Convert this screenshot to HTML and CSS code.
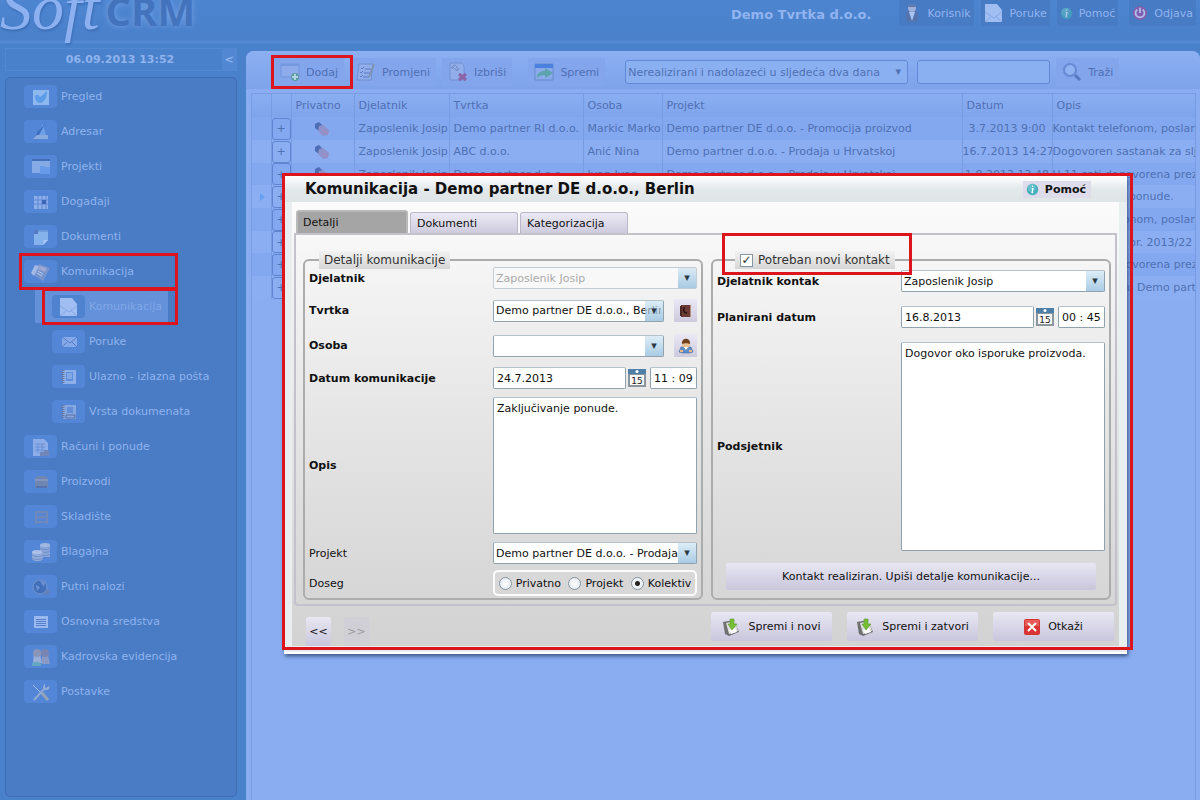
FILE: index.html
```
<!DOCTYPE html>
<html lang="hr">
<head>
<meta charset="utf-8">
<title>Soft CRM - Komunikacija</title>
<link rel="stylesheet" href="styles.css">
</head>
<body>

<!-- icon shapes -->
<svg class="defs" width="0" height="0">
  <symbol id="envelope" viewBox="0 0 20 20"><path d="M1 1h12l5 6v12H1z" fill="#a0bef2"/><path d="M1 9l9 6 8-6M1 19l7-6M18 19l-7-6" stroke="#86a8e6" fill="none"/></symbol>
  <symbol id="info" viewBox="0 0 16 16"><circle cx="8" cy="8" r="7" fill="#45aebd"/><circle cx="7" cy="6" r="5" fill="#7bd0d6" opacity=".5"/><path d="M8 3v2M7 7h1.500l-1 5h1.500" stroke="#fff" stroke-width="1.500" fill="none"/></symbol>
  <symbol id="hand" viewBox="0 0 18 16"><path d="M1 3l4-2 4 4-4 5-4-3z" fill="#4d6db4"/><path d="M5 5l4-1 6 5-1 5-5 1-5-5z" fill="#8f91ca"/><path d="M9 9l5 4" stroke="#b58bb5"/></symbol>
  <symbol id="disk" viewBox="0 0 18 18"><path d="M1 4l11-2 5 12-10 4-4-2z" fill="#707070"/><path d="M4 5l9-2 3 10-9 3z" fill="#dedede"/><path d="M7 12l6-2 2 4-6 2z" fill="#fafafa"/><path d="M8 1h4v5h3l-5 6-4-6h2z" fill="#77bd35" stroke="#4f9520" stroke-width=".5"/></symbol>
  <symbol id="calendar" viewBox="0 0 18 18"><path d="M0 0h18v18H0z" fill="#8b959e"/><path d="M2 6h14v10H2z" fill="#f8f8f8"/><path d="M0 0h18v5H0z" fill="#4e7fa9"/><circle cx="9" cy="2.500" r="1.500" fill="#fff"/><text x="9" y="15" text-anchor="middle" font-family="DejaVu Sans" font-size="9" fill="#222">15</text></symbol>
</svg>

<header class="top">
  <div class="logo"><span class="logo-soft">Soft</span><span class="logo-crm">CRM</span></div>
  <strong class="company">Demo Tvrtka d.o.o.</strong>
  <nav class="top-nav">
    <a href="#"><svg width="20" height="20" viewBox="0 0 20 20"><path d="M4 10c0-3 12-3 12 0l-1 9H5z" fill="#5573ac"/><circle cx="10" cy="5" r="4" fill="#9fb0dc"/><path d="M6 4c0-4 8-4 8 0z" fill="#5f78ad"/><path d="M7 9h6l-3 9z" fill="#a9c4f0"/></svg>Korisnik</a>
    <a href="#"><svg width="20" height="20"><use href="#envelope"/></svg>Poruke</a>
    <a href="#"><svg width="13" height="13" class="dim"><use href="#info"/></svg>Pomoć</a>
    <a href="#" class="logout"><svg width="16" height="16" viewBox="0 0 18 18"><circle cx="9" cy="9" r="8" fill="#8060ae"/><path d="M6 5a5 5 0 1 0 6 0M9 3v6" stroke="#b1bdec" stroke-width="2" fill="none"/></svg>Odjava</a>
  </nav>
</header>

<div class="layout">
  <aside class="side">
    <div class="date-bar"><strong>06.09.2013 13:52</strong><button class="collapse">&lt;</button></div>
    <ul class="menu">
      <li><a href="#"><i><svg width="20" height="20" viewBox="0 0 20 20"><path d="M2 3h16v15H2z" fill="#8eb9ef"/><path d="M4 9c3-3 4 0 5 1l7-6c0 8-4 12-7 12s-5-3-5-7z" fill="#5b9de8"/></svg></i>Pregled</a></li>
      <li><a href="#"><i><svg width="20" height="20" viewBox="0 0 20 20"><path d="M5 14L12 2l3 11z" fill="#6da0e8"/><path d="M5 14l3-1 6-11-8 8z" fill="#3c6fc3"/><path d="M2 17l4-4h11v4z" fill="#8aa9dc"/></svg></i>Adresar</a></li>
      <li><a href="#"><i><svg width="20" height="20" viewBox="0 0 20 20"><path d="M1 2h18v14H1z" fill="#86aae6"/><path d="M1 2h18v2H1z" fill="#446fb8"/><path d="M9 9h4l1 1h5v7H9z" fill="#669bea"/></svg></i>Projekti</a></li>
      <li><a href="#"><i><svg width="20" height="20" viewBox="0 0 20 20"><path d="M3 4h14v13H3z" fill="#8caee9"/><path d="M3 8h14M3 12h14M7 4v13M11 4v13M15 4v13" stroke="#6289d4"/><path d="M11 8h4v4h-4z" fill="#3e66b8"/></svg></i>Događaji</a></li>
      <li><a href="#"><i><svg width="20" height="20" viewBox="0 0 20 20"><path d="M3 3h14v10l-5 5H3z" fill="#86b2ec"/><path d="M12 18l1-5h4z" fill="#a9c9f4"/><path d="M3 3h4v4H3z" fill="#567bc0"/><path d="M7 4h10" stroke="#5583cf"/></svg></i>Dokumenti</a></li>
      <li class="marked"><a href="#"><i><svg width="20" height="20" viewBox="0 0 20 20"><path d="M8 2l11 4-7 13L1 12z" fill="#7894cd"/><path d="M4 3l4 1-5 10-3-3z" fill="#a5b9e5"/><path d="M9 4l7 2-2 4-7-3z" fill="#9ca9d3"/><path d="M7 9l5 3M6 11l5 3" stroke="#b3c9ee"/></svg></i>Komunikacija</a>
        <ul>
          <li class="marked active"><a href="#"><i><svg width="20" height="20"><use href="#envelope"/></svg></i>Komunikacija</a></li>
          <li><a href="#"><i><svg width="20" height="20" viewBox="0 0 20 20"><path d="M3 5h15v10H3z" fill="#85a9e8"/><path d="M3 5l8 6 7-6M3 15l5-5M18 15l-5-5" stroke="#557bc5" fill="none"/></svg></i>Poruke</a></li>
          <li><a href="#"><i><svg width="20" height="20" viewBox="0 0 20 20"><path d="M4 3h13v14H4z" fill="#8eb0e8"/><path d="M4 3v14" stroke="#68789f" stroke-width="3" stroke-dasharray="1 1"/><path d="M7 5h7v9H7z" fill="#5f8fdc"/><path d="M8 7h5M8 9h5M8 11h5" stroke="#a5c0ec"/></svg></i>Ulazno - izlazna pošta</a></li>
          <li><a href="#"><i><svg width="20" height="20" viewBox="0 0 20 20"><path d="M4 3h13v14H4z" fill="#86a6df"/><path d="M4 3v14" stroke="#68789f" stroke-width="3" stroke-dasharray="1 1"/><path d="M8 5h6v6H8z" fill="#648fd7"/><path d="M7 13h9v3H7z" fill="#86a6df" stroke="#596fa3"/></svg></i>Vrsta dokumenata</a></li>
        </ul>
      </li>
      <li><a href="#"><i><svg width="20" height="20" viewBox="0 0 20 20"><path d="M2 2h11l4 4v13H2z" fill="#8cade7"/><path d="M4 7h10M4 10h10M4 13h10M7 7v9M11 7v9" stroke="#6b91d6"/><path d="M9 15h4v-2h5v6H9z" fill="#7086b8"/></svg></i>Računi i ponude</a></li>
      <li><a href="#"><i><svg width="20" height="20" viewBox="0 0 20 20"><path d="M4 7l2-3h9l2 3v9H4z" fill="#7086b2"/><path d="M4 7h13v2H4z" fill="#8295ba"/><path d="M5 15h11" stroke="#5872ae" stroke-width="2"/></svg></i>Proizvodi</a></li>
      <li><a href="#"><i><svg width="20" height="20" viewBox="0 0 20 20"><path d="M5 4v13M16 4v13M5 5h11M5 10h11M5 15h11" stroke="#7089b9" stroke-width="2"/><path d="M7 7h7M7 12h7" stroke="#5f86cd"/></svg></i>Skladište</a></li>
      <li><a href="#"><i><svg width="20" height="20" viewBox="0 0 20 20"><path d="M9 3v12h10V3z" fill="#89a6dc"/><ellipse cx="14" cy="3" rx="5" ry="2" fill="#a2b8e3"/><path d="M9 6c2 2 8 2 10 0M9 9c2 2 8 2 10 0M9 12c2 2 8 2 10 0" stroke="#7590c6" fill="none"/><path d="M1 10v7c2 3 9 3 11 0v-7z" fill="#91abdc"/><ellipse cx="6" cy="10" rx="5" ry="2" fill="#abc0e7"/><path d="M1 13c2 2 9 2 11 0M1 16c2 2 9 2 11 0" stroke="#7590c6" fill="none"/></svg></i>Blagajna</a></li>
      <li><a href="#"><i><svg width="20" height="20" viewBox="0 0 20 20"><circle cx="9" cy="10" r="7" fill="#416fba"/><path d="M5 8l4 2-3 4zM9 4l5 1-1 5z" fill="#6f93d2"/><circle cx="9" cy="10" r="7" stroke="#7896ce" fill="none"/><path d="M15 14l4-2-2 6-5-1z" fill="#6380b7"/></svg></i>Putni nalozi</a></li>
      <li><a href="#"><i><svg width="20" height="20" viewBox="0 0 20 20"><path d="M3 4h14v12H3z" fill="#9ab9f0"/><path d="M5 7.500h10M5 9.500h10M5 11.500h10M5 13.500h10" stroke="#567fc9"/></svg></i>Osnovna sredstva</a></li>
      <li><a href="#"><i><svg width="20" height="20" viewBox="0 0 20 20"><path d="M2 15l1-8h6l2 9H2z" fill="#9baed8"/><path d="M11 8h6l2 9h-8z" fill="#899ac4"/><circle cx="6" cy="6" r="4" fill="#8b95b8"/><circle cx="14" cy="6" r="4" fill="#7985b0"/><path d="M1 17c1-3 8-3 9 0v2H1z" fill="#65a6c2"/></svg></i>Kadrovska evidencija</a></li>
      <li><a href="#"><i><svg width="20" height="20" viewBox="0 0 20 20"><path d="M2 3l9 9" stroke="#9dbbe9"/><path d="M11 11l6 7" stroke="#91a4b5" stroke-width="3"/><path d="M3 18L14 6" stroke="#92a9d3" stroke-width="2"/><path d="M14 2c-3 1-2 6 1 6 2 0 4-1 3-4l-3 2-1-1z" fill="#93addb"/></svg></i>Postavke</a></li>
    </ul>
  </aside>

  <main class="main">
    <div class="toolbar">
      <button class="tool marked"><svg width="20" height="20" viewBox="0 0 20 20"><path d="M1 2h18v13H1z" fill="#8eaceb" stroke="#7194dc"/><path d="M1 2h18v2H1z" fill="#7598df"/><circle cx="15" cy="15" r="4" fill="#5a9c9f"/><path d="M15 12v6M12 15h6" stroke="#b1d3e3" stroke-width="2"/></svg>Dodaj</button>
      <button class="tool"><svg width="20" height="20" viewBox="0 0 20 20"><path d="M3 2h14l-2 16H1z" fill="#91aeeb" stroke="#7290d3"/><path d="M5 6l1 1 2-2M4 10l1 1 2-2M4 14l1 1 2-2M9 7h6M8 11h6M7 15h6" stroke="#5c7dc6" fill="none"/><path d="M18 2l-5 13" stroke="#7e93b1" stroke-width="2"/></svg>Promjeni</button>
      <button class="tool"><svg width="20" height="20" viewBox="0 0 20 20"><path d="M2 1h12l2 3v14H2z" fill="#91aeeb" stroke="#7290d3"/><path d="M4 7c0-5 5-5 5-1v3M5 5l4 4 3-3" stroke="#718bc7" fill="none"/><path d="M11 12l7 6M18 12l-7 6" stroke="#8b63a7" stroke-width="3"/></svg>Izbriši</button>
      <button class="tool save"><svg width="20" height="20" viewBox="0 0 20 20"><path d="M1 2h18v16H1z" fill="#8aaaea" stroke="#6788cd"/><path d="M1 2h18v4H1z" fill="#4c80df"/><path d="M3 16c0-5 3-7 8-7V6l8 5-8 5v-3c-4 0-6 1-8 3z" fill="#5ba4ac"/></svg>Spremi</button>
      <span class="combo filter"><select aria-label="Filter"><option>Nerealizirani i nadolazeći u sljedeća dva dana</option></select></span>
      <input class="search" type="text" aria-label="Traži">
      <button class="tool"><svg width="20" height="20" viewBox="0 0 20 20"><circle cx="8" cy="8" r="6" fill="#8eb2f2" stroke="#6689d4" stroke-width="2"/><path d="M13 13l5 5" stroke="#5578c0" stroke-width="3"/></svg>Traži</button>
    </div>
    <div class="grid-wrap">
      <table class="grid">
        <colgroup><col class="c-mark"><col class="c-plus"><col class="c-priv"><col class="c-djel"><col class="c-tvrt"><col class="c-osob"><col class="c-proj"><col class="c-dat"><col></colgroup>
        <thead><tr><th></th><th></th><th>Privatno</th><th>Djelatnik</th><th>Tvrtka</th><th>Osoba</th><th>Projekt</th><th>Datum</th><th>Opis</th></tr></thead>
        <tbody>
          <tr><td></td><td><button>+</button></td><td class="priv"><svg width="18" height="16"><use href="#hand"/></svg></td><td>Zaposlenik Josip</td><td>Demo partner RI d.o.o.</td><td>Markic Marko</td><td>Demo partner DE d.o.o. - Promocija proizvod</td><td class="date">3.7.2013 9:00</td><td class="desc">Kontakt telefonom, poslan</td></tr>
          <tr><td></td><td><button>+</button></td><td class="priv"><svg width="18" height="16"><use href="#hand"/></svg></td><td>Zaposlenik Josip</td><td>ABC d.o.o.</td><td>Anić Nina</td><td>Demo partner d.o.o. - Prodaja u Hrvatskoj</td><td class="date">16.7.2013 14:27</td><td class="desc">Dogovoren sastanak za slje</td></tr>
          <tr><td></td><td><button>+</button></td><td class="priv"><svg width="18" height="16"><use href="#hand"/></svg></td><td>Zaposlenik Josip</td><td>Demo partner d.o.o.</td><td>Ivan Ivan</td><td>Demo partner d.o.o. - Prodaja u Hrvatskoj</td><td class="date">1.8.2013 13:48</td><td class="desc">U 11 sati dogovorena preze</td></tr>
          <tr><td class="current"></td><td><button>+</button></td><td></td><td></td><td></td><td></td><td></td><td></td><td class="desc">Zaključivanje ponude.</td></tr>
          <tr><td></td><td><button>+</button></td><td></td><td></td><td></td><td></td><td></td><td></td><td class="desc">Kontakt telefonom, poslan</td></tr>
          <tr><td></td><td><button>+</button></td><td></td><td></td><td></td><td></td><td></td><td></td><td class="desc">Nova ponuda br. 2013/22</td></tr>
          <tr><td></td><td><button>+</button></td><td></td><td></td><td></td><td></td><td></td><td></td><td class="desc">U 11 sati dogovorena preze</td></tr>
          <tr><td></td><td><button>+</button></td><td></td><td></td><td></td><td></td><td></td><td></td><td class="desc">Za novu tvrtku Demo part</td></tr>
        </tbody>
      </table>
    </div>
  </main>
</div>

<form class="dialog" role="dialog" aria-labelledby="dialog-title">
  <div class="dialog-head">
    <h1 id="dialog-title">Komunikacija - Demo partner DE d.o.o., Berlin</h1>
    <button type="button" class="help"><svg width="13" height="13"><use href="#info"/></svg>Pomoć</button>
  </div>
  <div class="dialog-body">
    <div class="tabs">
      <button type="button" class="tab selected">Detalji</button>
      <button type="button" class="tab">Dokumenti</button>
      <button type="button" class="tab">Kategorizacija</button>
    </div>
    <div class="tab-page">
      <fieldset class="details">
        <legend>Detalji komunikacije</legend>
        <div class="row">
          <label for="djelatnik">Djelatnik</label>
          <span class="combo"><select id="djelatnik" disabled><option>Zaposlenik Josip</option></select></span>
        </div>
        <div class="row tall">
          <label for="tvrtka">Tvrtka</label>
          <span class="combo"><select id="tvrtka"><option>Demo partner DE d.o.o., Berlin</option></select></span>
          <button type="button" class="pick" aria-label="Adresar"><svg width="14" height="14" viewBox="0 0 14 14"><path d="M2 1h9v12H2z" fill="#6b3a35"/><path d="M11 1h1v12h-1z" fill="#b48b7b"/><path d="M1 2h2v10H1z" fill="#4b2827"/><path d="M5 4c-1 3 0 5 3 5M5 4h1M7 9h1" stroke="#251010" stroke-width="1.500" fill="none"/></svg></button>
        </div>
        <div class="row tall">
          <label for="osoba">Osoba</label>
          <span class="combo"><select id="osoba"><option></option></select></span>
          <button type="button" class="pick" aria-label="Osoba"><svg width="16" height="16" viewBox="0 0 16 16"><path d="M1 14l2-5h10l2 5-4 1H5z" fill="#5f8dca" stroke="#355f9b" stroke-width=".5"/><circle cx="8" cy="6" r="4" fill="#eabf94"/><path d="M4 6c-1-7 9-7 8 0-2-1-6-1-8 0z" fill="#70401f"/><path d="M6 9l2 3 2-3z" fill="#fff"/><path d="M2 13h3M11 13h3" stroke="#edb787" stroke-width="2"/></svg></button>
        </div>
        <div class="row">
          <label for="datum">Datum komunikacije</label>
          <input id="datum" type="text" value="24.7.2013">
          <svg width="18" height="18"><use href="#calendar"/></svg>
          <input class="time" type="text" value="11 : 09" aria-label="Vrijeme">
        </div>
        <div class="row fill">
          <label for="opis">Opis</label>
          <textarea id="opis">Zaključivanje ponude.</textarea>
        </div>
        <div class="row plain">
          <label for="projekt">Projekt</label>
          <span class="combo"><select id="projekt"><option>Demo partner DE d.o.o. - Prodaja</option></select></span>
        </div>
        <div class="row plain">
          <span class="label" id="doseg">Doseg</span>
          <div class="radios" role="radiogroup" aria-labelledby="doseg">
            <label><input type="radio" name="doseg">Privatno</label>
            <label><input type="radio" name="doseg">Projekt</label>
            <label><input type="radio" name="doseg" checked>Kolektiv</label>
          </div>
        </div>
      </fieldset>
      <fieldset class="contact">
        <legend class="marked"><label><input type="checkbox" checked>Potreban novi kontakt</label></legend>
        <div class="row">
          <label for="djelatnik2">Djelatnik kontak</label>
          <span class="combo"><select id="djelatnik2"><option>Zaposlenik Josip</option></select></span>
        </div>
        <div class="row">
          <label for="datum2">Planirani datum</label>
          <input id="datum2" type="text" value="16.8.2013">
          <svg width="18" height="18"><use href="#calendar"/></svg>
          <input class="time" type="text" value="00 : 45" aria-label="Vrijeme">
        </div>
        <div class="row fill">
          <label for="podsjetnik">Podsjetnik</label>
          <textarea id="podsjetnik">Dogovor oko isporuke proizvoda.</textarea>
        </div>
        <button type="button" class="btn done">Kontakt realiziran. Upiši detalje komunikacije...</button>
      </fieldset>
    </div>
    <div class="actions">
      <button type="button" class="btn step">&lt;&lt;</button>
      <button type="button" class="btn step" disabled>&gt;&gt;</button>
      <span class="spacer"></span>
      <button type="button" class="btn"><svg width="18" height="18"><use href="#disk"/></svg>Spremi i novi</button>
      <button type="button" class="btn wide"><svg width="18" height="18"><use href="#disk"/></svg>Spremi i zatvori</button>
      <button type="button" class="btn"><svg width="16" height="16" viewBox="0 0 16 16"><rect width="16" height="16" rx="2" fill="#d93434"/><path d="M1 1h14v6H1z" fill="#ee7772" opacity=".6"/><path d="M4 4l8 8M12 4l-8 8" stroke="#fff" stroke-width="2"/></svg>Otkaži</button>
    </div>
  </div>
</form>

</body>
</html>
```
FILE: styles.css
```
*, *::before, *::after {
  box-sizing: border-box;
}

body {
  margin: 0;
  height: 100vh;
  overflow: hidden;
  display: flex;
  flex-direction: column;
  background: #4a81cb;
  font: 11px "DejaVu Sans", Verdana, sans-serif;
}

button, input, select, textarea {
  font: inherit;
  color: inherit;
  margin: 0;
}

button {
  border: 0;
  background: none;
  padding: 0;
}

a {
  color: inherit;
  text-decoration: none;
}

ul {
  list-style: none;
  margin: 0;
  padding: 0;
}

svg {
  flex: none;
}

.defs {
  position: absolute;
}

/* red frame round the highlighted parts */
.marked {
  position: relative;
}

.marked::before,
.dialog::before {
  content: "";
  position: absolute;
  border: 3px solid #dc141c;
  pointer-events: none;
  z-index: 2;
}

/* header */
.top {
  flex: none;
  height: 44px;
  display: flex;
  align-items: flex-start;
  background: linear-gradient(#4d85d0, #4a80ca 40px, #5389d2 41px, #5389d2 43px, #4a81cb 44px);
  color: #91b4f1;
  padding-right: 4px;
}

.logo {
  flex: 1;
  display: flex;
  align-items: flex-start;
  gap: 6px;
  white-space: nowrap;
}

.logo-soft {
  font: italic 64px/16px "Liberation Serif", serif;
  color: #8db1f0;
  text-shadow: 1px 2px 2px #3e6fb7;
}

.logo-crm {
  font: bold 40px/22px "Open Sans", sans-serif;
  color: #4473be;
  text-shadow: 0 0 6px #76a4e6;
}

.company {
  font-size: 13px;
  line-height: 30px;
  margin-right: 27px;
}

.top-nav {
  display: flex;
  gap: 7px;
}

.top-nav a {
  display: flex;
  align-items: center;
  gap: 6px;
  height: 26px;
  padding: 0 3px;
  background: #477bc4;
  border-radius: 0 0 3px 3px;
}

.top-nav .logout {
  margin-left: 4px;
}

.dim {
  opacity: .6;
}

.layout {
  flex: 1;
  min-height: 0;
  display: flex;
  gap: 9px;
}

/* side menu */
.side {
  width: 237px;
  flex: none;
  padding: 4px 0 3px 5px;
  display: flex;
  flex-direction: column;
  gap: 6px;
  color: #8fb3ee;
}

.date-bar {
  display: flex;
  height: 23px;
  border: 1px solid #5388d2;
}

.date-bar strong {
  flex: 1;
  padding-left: 12px;
  text-align: center;
  line-height: 22px;
}

.collapse {
  width: 14px;
  font-weight: bold;
  background: #5287d3;
}

.menu {
  flex: 1;
  border: 1px solid #3f6db3;
  border-radius: 5px;
  background: #497cc5;
  padding-top: 1px;
}

.menu li a {
  display: flex;
  align-items: center;
  gap: 4px;
  height: 35px;
  padding-left: 18px;
}

.menu li li a {
  padding-left: 46px;
}

.menu i {
  display: flex;
  align-items: center;
  justify-content: center;
  width: 33px;
  height: 23px;
  border-radius: 4px;
  background: #5386d6;
}

.menu .active > a {
  background: linear-gradient(#6491da, #6491da) 29px 1px / 133px 33px no-repeat;
  color: #82a8e7;
}

.menu .active i {
  background: #4f82cf;
}

.menu .marked::before {
  left: 13px;
  right: 58px;
  top: -1px;
  height: 37px;
}

.menu .marked .marked::before {
  left: 36px;
}

/* content */
.main {
  flex: 1;
  min-width: 0;
  margin-top: 7px;
  padding: 0 4px 0 5px;
  background: #89adf0;
  border-radius: 8px 8px 0 0;
  color: #4f70b4;
  display: flex;
  flex-direction: column;
}

.toolbar {
  height: 38px;
  padding: 4px 0 0 28px;
  margin: 0 -4px 4px -5px;
  border-radius: 8px 8px 0 0;
  background: linear-gradient(#8baff1, #7fa3ea);
  display: flex;
  align-items: center;
  gap: 6px;
}

.tool {
  display: flex;
  align-items: center;
  gap: 6px;
  height: 28px;
  padding: 0 6px;
  background: #83a5ec;
  white-space: nowrap;
}

.tool.save {
  margin-left: 10px;
}

.tool.marked::before {
  inset: -3px -9px -3px -3px;
}

.toolbar .filter {
  flex: none;
  width: 283px;
  margin-left: 14px;
}

.toolbar .filter select,
.toolbar .search {
  height: 24px;
  border: 1px solid #6288d6;
  border-radius: 3px;
  background: #8bb0f2;
}

.toolbar .filter::after {
  background: none;
  color: #4f70b4;
  line-height: 22px;
}

.toolbar .search {
  flex: none;
  width: 133px;
  margin-left: 3px;
}

.grid-wrap {
  flex: 1;
  border: 1px solid #789ce4;
  border-bottom: 0;
}

.grid {
  width: 100%;
  table-layout: fixed;
  border-collapse: collapse;
}

.c-mark { width: 19px; }
.c-plus { width: 20px; }
.c-priv { width: 63px; }
.c-djel { width: 95px; }
.c-tvrt { width: 134px; }
.c-osob { width: 79px; }
.c-proj { width: 300px; }
.c-dat { width: 90px; }

.grid th,
.grid td {
  padding: 0 0 0 4px;
  height: 23px;
  text-align: left;
  font-weight: normal;
  white-space: nowrap;
  overflow: hidden;
  border-right: 1px solid #789ce4;
}

.grid tbody tr:nth-child(3n) td {
  height: 22px;
}

.grid th {
  background: linear-gradient(#8aaef1, #80a4eb);
}

.grid th:last-child,
.grid td:last-child {
  border-right: 0;
}

.grid tbody tr:nth-child(odd) {
  background: #83a8ef;
}

.grid tbody tr:nth-child(even) {
  background: #8aaef1;
}

.grid td:nth-child(2) {
  padding: 0;
}

.grid .date {
  padding: 0;
  text-align: center;
}

.grid .desc {
  padding: 0;
}

.grid td button {
  display: block;
  width: 19px;
  height: 22px;
  border: 1px solid #6084cf;
  border-radius: 3px;
}

.grid .priv {
  padding: 0;
  text-align: center;
}

.priv svg {
  display: block;
  margin: 0 auto;
}

.current::before {
  content: "";
  display: block;
  margin-left: 4px;
  width: 0;
  border: 4px solid transparent;
  border-left: 5px solid #62a2ef;
}

/* dialog window */
.dialog {
  position: absolute;
  left: 284px;
  right: 73px;
  top: 176px;
  padding: 0 8px 6px;
  background: #e9eff1;
  box-shadow: 1px 2px 4px #35507f;
  border-bottom: 2px solid #fff;
  color: #111;
}

.dialog::before {
  inset: -3px -6px 2px -2px;
}

.dialog-head {
  display: flex;
  align-items: center;
  height: 26px;
  margin: 0 -8px;
  padding: 0 36px 0 21px;
  background: linear-gradient(#fff, #e3e8ea 50%, #dfe4e6);
}

.dialog-head h1 {
  flex: 1;
  margin: 0;
  font-size: 15px;
}

.help {
  display: flex;
  align-items: center;
  gap: 6px;
  padding: 0 5px 0 3px;
  height: 17px;
  font-weight: bold;
  background: #dedbea;
}

.dialog-body {
  background: linear-gradient(#fbfbfb, #e5e5e5 50%, #d2d2d2);
  padding: 8px 2px 0;
}

.tabs {
  display: flex;
  align-items: flex-end;
  gap: 2px;
  padding-left: 2px;
}

.tab {
  width: 108px;
  height: 21px;
  text-align: left;
  padding-left: 6px;
  border: 1px solid #bab8c6;
  border-bottom: 0;
  border-radius: 3px 3px 0 0;
  background: linear-gradient(#eceaf5, #cecbdd);
}

.tab.selected {
  width: 112px;
  height: 23px;
  border: 2px solid #b9b9b9;
  border-bottom: 0;
  padding-left: 5px;
  background: #a5a5a5;
}

.tab-page {
  display: flex;
  gap: 8px;
  border: 2px solid #c3c1ca;
  border-radius: 0 0 4px 4px;
  padding: 16px 4px 4px 7px;
  height: 373px;
}

fieldset {
  flex: 1;
  min-width: 0;
  margin: 0;
  padding: 0 4px;
  border: 2px solid #acacac;
  border-radius: 6px;
  display: flex;
  flex-direction: column;
}

legend {
  margin-left: 10px;
  padding: 0 5px;
  height: 18px;
  font-size: 12px;
  line-height: 18px;
  color: #333;
  background: linear-gradient(#f2f2f2, #d6d6d6);
}

.contact legend {
  margin-left: 18px;
}

legend label {
  display: flex;
  align-items: center;
  gap: 5px;
}

legend.marked::before {
  left: -13px;
  right: -17px;
  top: -18px;
  bottom: -6px;
}

.row {
  display: flex;
  align-items: center;
  gap: 2px;
  min-height: 30px;
}

legend + .row {
  margin-top: -6px;
}

.row.tall {
  min-height: 35px;
}

.row > label,
.row > .label {
  width: 182px;
  flex: none;
  font-weight: bold;
}

.row.plain > label,
.row.plain > .label {
  font-weight: normal;
}

.contact .row {
  min-height: 36px;
}

.details .fill,
.contact .fill {
  flex: 1;
  align-items: stretch;
  padding: 4px 0;
}

.contact .fill {
  padding-top: 7px;
}

.fill > label {
  align-self: center;
}

input[type="text"],
textarea,
.row select {
  flex: 1;
  min-width: 0;
  border: 1px solid #8fa2ae;
  border-top-color: #b5c2ca;
  background: #fff;
  border-radius: 2px;
  padding: 0 3px;
}

.row input[type="text"] {
  height: 22px;
}

.row input.time {
  flex: none;
  width: 47px;
  margin-left: 2px;
}

textarea {
  resize: none;
  padding: 4px 3px;
}

.combo {
  flex: 1;
  min-width: 0;
  display: flex;
  position: relative;
}

.combo select {
  appearance: none;
  width: 100%;
  height: 22px;
  padding: 0 2px;
  opacity: 1;
}

/* arrow button lies over the end of the text */
.combo::after {
  content: "▾";
  position: absolute;
  right: 1px;
  top: 1px;
  bottom: 1px;
  width: 18px;
  text-align: center;
  line-height: 20px;
  color: #2b3a46;
  background: linear-gradient(rgba(206, 229, 243, .7), rgba(134, 182, 216, .7));
  pointer-events: none;
}

.row select:disabled {
  color: #aaa;
  background: #f8f8f8;
  border-color: #c5ccd1;
}

.pick {
  display: flex;
  align-items: center;
  justify-content: center;
  width: 23px;
  height: 23px;
  margin-left: 8px;
  background: linear-gradient(#eae8f4, #cdcade);
}

.radios {
  flex: 1;
  height: 26px;
  display: flex;
  align-items: center;
  justify-content: space-around;
  border: 2px solid #fbfbfb;
  border-radius: 5px;
}

.radios label {
  display: flex;
  align-items: center;
  gap: 4px;
}

input[type="radio"],
input[type="checkbox"] {
  appearance: none;
  width: 13px;
  height: 13px;
  border: 1px solid #8796a2;
  border-radius: 50%;
  background: radial-gradient(#fff, #dde4ea);
}

input[type="radio"]:checked {
  background: radial-gradient(circle, #222 2px, #eef2f5 3px);
}

input[type="checkbox"] {
  border-radius: 0;
  background: #fff;
  line-height: 11px;
}

input[type="checkbox"]:checked::before {
  content: "✓";
  display: block;
  font-weight: bold;
  text-align: center;
}

.btn {
  display: flex;
  align-items: center;
  justify-content: center;
  gap: 8px;
  width: 121px;
  height: 29px;
  background: linear-gradient(#e8e7f2, #c9c6dd);
  border-radius: 2px;
}

.btn.wide {
  width: 131px;
}

.btn.done {
  width: auto;
  height: 27px;
  margin: 8px 9px;
}

.actions {
  display: flex;
  gap: 15px;
  padding: 6px 3px 0 12px;
}

.btn.step {
  width: 25px;
  margin: 5px -2px 0 0;
}

.btn:disabled {
  color: #999;
  background: #d0cfd6;
}

.spacer {
  flex: 1;
}
```
